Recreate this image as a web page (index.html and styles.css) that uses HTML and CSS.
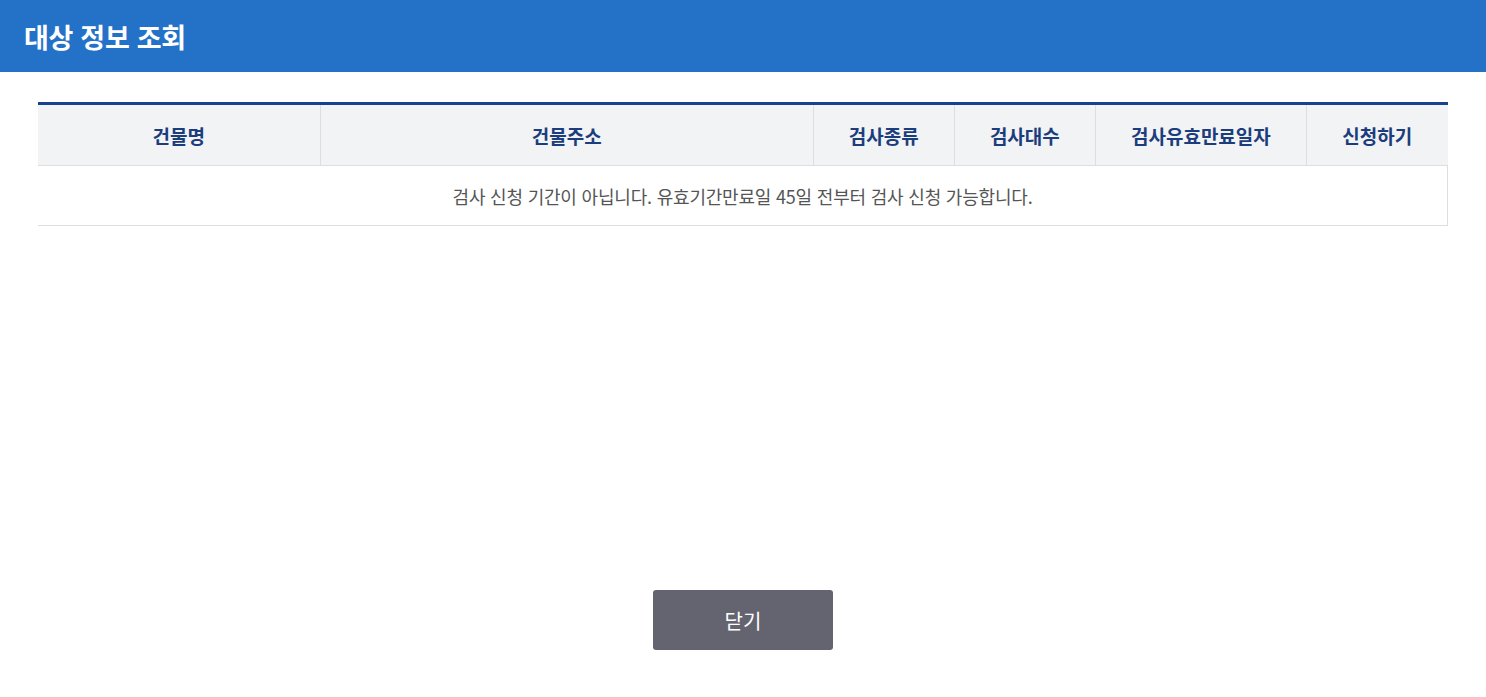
FILE: index.html
```html
<!DOCTYPE html>
<html lang="ko">
<head>
    <meta charset="utf-8">
    <link rel="stylesheet" href="styles.css">
    <title>대상 정보 조회</title>
</head>
<body>
    <div class="popup-header">
        <h1>대상 정보 조회</h1>
    </div>
    <div class="popup-body">
        <table class="target-table">
            <colgroup>
                <col style="width: 282px">
                <col style="width: 493px">
                <col style="width: 141px">
                <col style="width: 141px">
                <col style="width: 211px">
                <col style="width: 141px">
            </colgroup>
            <thead>
                <tr>
                    <th>건물명</th>
                    <th>건물주소</th>
                    <th>검사종류</th>
                    <th>검사대수</th>
                    <th>검사유효만료일자</th>
                    <th>신청하기</th>
                </tr>
            </thead>
            <tbody>
                <tr>
                    <td colspan="6" class="empty-row">검사 신청 기간이 아닙니다. 유효기간만료일 45일 전부터 검사 신청 가능합니다.</td>
                </tr>
            </tbody>
        </table>
    </div>
    <div class="button-container">
        <button class="close-button" id="closeButton">닫기</button>
    </div>
</body>
</html>
```

FILE: styles.css
```css
body {
    font-family: "Noto Sans CJK KR", "Noto Sans", sans-serif;
    margin: 0;
    background-color: #fff;
}

.popup-header {
    height: 72px;
    background-color: #2472c8;
    display: flex;
    align-items: center;
    padding-left: 24px;
}

.popup-header h1 {
    margin: 0;
    color: #fff;
    font-size: 27px;
    font-weight: bold;
    letter-spacing: -0.3px;
}

.popup-body {
    padding: 30px 38px 0 38px;
    height: 488px;
}

.target-table {
    width: 1410px;
    border-collapse: collapse;
    table-layout: fixed;
    border-top: 3px solid #16418f;
}

.target-table th {
    height: 60px;
    padding: 0;
    background-color: #f2f3f5;
    color: #1b3d7c;
    font-size: 19px;
    font-weight: bold;
    text-align: center;
    border-left: 1px solid #dcdee2;
    border-bottom: 1px solid #dcdee2;
}

.target-table th:first-child {
    border-left: none;
}

.target-table td {
    height: 59px;
    padding: 0;
    text-align: center;
    color: #555;
    font-size: 18px;
    letter-spacing: -0.2px;
    border-bottom: 1px solid #dcdee2;
    border-right: 1px solid #dcdee2;
}

.button-container {
    display: flex;
    justify-content: center;
}

.close-button {
    width: 180px;
    height: 60px;
    background-color: #646470;
    color: #fff;
    border: none;
    border-radius: 3px;
    font-family: inherit;
    font-size: 20px;
    cursor: pointer;
}
```
